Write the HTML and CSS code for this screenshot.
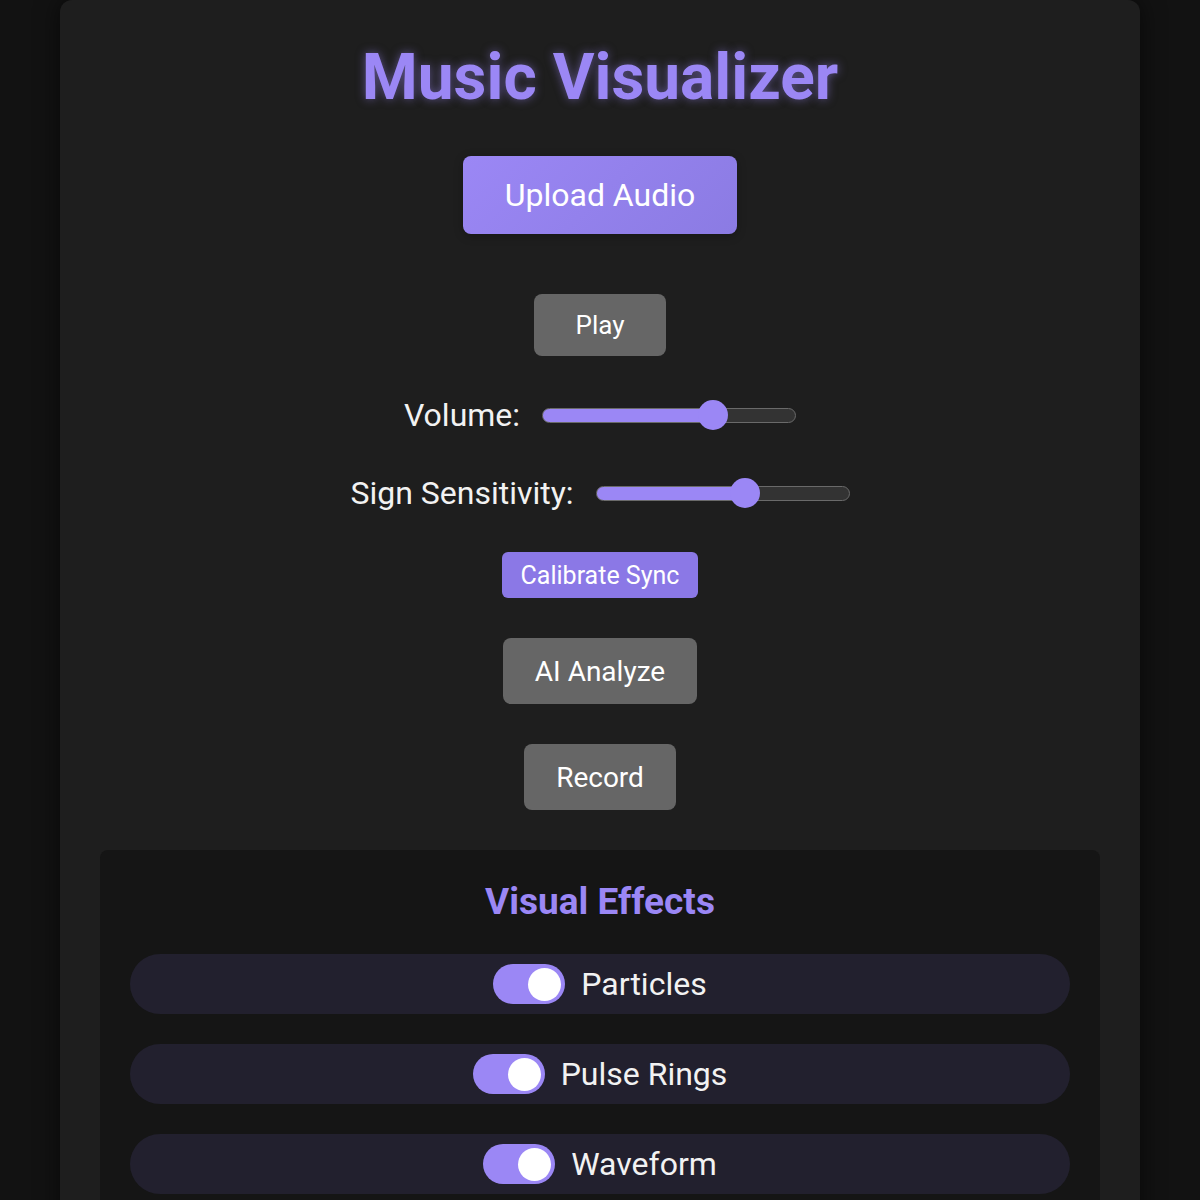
FILE: index.html
```html
<!DOCTYPE html>
<html lang="en">
<head>
    <meta charset="UTF-8">
    <meta name="viewport" content="width=device-width, initial-scale=1.0">
    <title>Music Visualizer</title>
    <link rel="stylesheet" href="styles.css">
</head>
<body>
    <div class="container">
        <h1 class="title">Music Visualizer</h1>

        <button class="upload-btn">Upload Audio</button>

        <button class="btn">Play</button>

        <div class="slider-row">
            <label for="volume">Volume:</label>
            <input type="range" id="volume" class="slider" min="0" max="100" value="70" style="--fill: 67.6%">
        </div>

        <div class="slider-row">
            <label for="sensitivity">Sign Sensitivity:</label>
            <input type="range" id="sensitivity" class="slider" min="0" max="100" value="60" style="--fill: 58.8%">
        </div>

        <button class="calibrate-btn">Calibrate Sync</button>

        <button class="btn btn-big">AI Analyze</button>

        <button class="btn btn-big">Record</button>

        <div class="effects-panel">
            <h2 class="effects-title">Visual Effects</h2>

            <div class="effect-row">
                <span class="toggle"><span class="knob"></span></span>
                <span class="effect-name">Particles</span>
            </div>
            <div class="effect-row">
                <span class="toggle"><span class="knob"></span></span>
                <span class="effect-name">Pulse Rings</span>
            </div>
            <div class="effect-row">
                <span class="toggle"><span class="knob"></span></span>
                <span class="effect-name">Waveform</span>
            </div>
            <div class="effect-row">
                <span class="toggle"><span class="knob"></span></span>
                <span class="effect-name">Spectrum</span>
            </div>
        </div>
    </div>
</body>
</html>
```

FILE: styles.css
```css
body {
    margin: 0;
    background-color: #121212;
    color: #f2f2f2;
    font-family: Roboto, "Liberation Sans", sans-serif;
}

.container {
    width: 1000px;
    margin: 0 auto;
    padding: 40px;
    background-color: #1e1e1e;
    border-radius: 12px;
    box-shadow: 0 0 24px rgba(0,0,0,0.6);
    display: flex;
    flex-direction: column;
    align-items: center;
    gap: 40px;
}

.title {
    margin: 0 0 1px;
    font-size: 64px;
    font-weight: 700;
    color: #9b87f5;
    text-shadow: 0 0 10px rgba(155,135,245,0.5);
}

button {
    font-family: inherit;
    color: #fff;
    border: none;
    cursor: pointer;
}

.upload-btn {
    padding: 20px 42px;
    font-size: 32px;
    border-radius: 8px;
    background: linear-gradient(135deg, #9b87f5, #8b7be3);
    box-shadow: 0 2px 10px rgba(0,0,0,0.25);
    margin-bottom: 20px;
}

.btn {
    padding: 16px 42px;
    font-size: 26px;
    border-radius: 8px;
    background-color: #666;
}

.btn-big {
    padding: 16.5px 32px;
    font-size: 28px;
}

.calibrate-btn {
    padding: 8.5px 19px;
    font-size: 25px;
    border-radius: 6px;
    background-color: #8b78e6;
}

.slider-row {
    display: flex;
    align-items: center;
    gap: 22px;
}

.slider-row label {
    font-size: 32px;
}

.slider {
    -webkit-appearance: none;
    appearance: none;
    margin: 0;
    width: 254px;
    height: 15px;
    border: 1.5px solid #6a6a6a;
    border-radius: 8px;
    background: linear-gradient(to right, #9b87f5 var(--fill), #333 var(--fill));
    box-sizing: border-box;
}

.slider::-webkit-slider-thumb {
    -webkit-appearance: none;
    appearance: none;
    width: 30px;
    height: 30px;
    border-radius: 50%;
    background-color: #9b87f5;
}

.effects-panel {
    align-self: stretch;
    background-color: #151515;
    border-radius: 8px;
    padding: 30px;
    display: flex;
    flex-direction: column;
    gap: 30px;
}

.effects-title {
    margin: 0 0 1px;
    text-align: center;
    font-size: 37px;
    font-weight: 700;
    color: #9b87f5;
}

.effect-row {
    display: flex;
    justify-content: center;
    align-items: center;
    gap: 16px;
    height: 60px;
    border-radius: 30px;
    background-color: #22202e;
}

.toggle {
    width: 72px;
    height: 40px;
    border-radius: 20px;
    background-color: #9b87f5;
    display: flex;
    align-items: center;
    justify-content: flex-end;
    padding: 0 4px;
    box-sizing: border-box;
}

.knob {
    width: 33px;
    height: 33px;
    border-radius: 50%;
    background-color: #fff;
}

.effect-name {
    font-size: 32px;
    color: #f2f2f2;
}
```
